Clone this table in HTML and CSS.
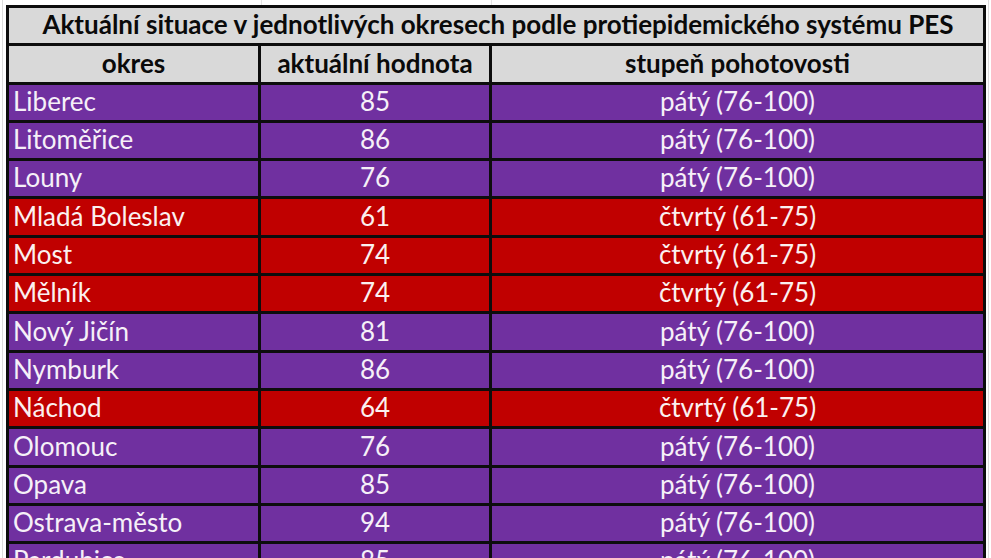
FILE: index.html
```html
<!DOCTYPE html>
<html lang="cs">
<head>
<meta charset="utf-8">
<title>PES okresy</title>
<link rel="stylesheet" href="styles.css">
</head>
<body>
<div class="sheet">
  <div class="grid">
    <div class="cell title">Aktuální situace v jednotlivých okresech podle protiepidemického systému PES</div>
    <div class="cell head">okres</div>
    <div class="cell head">aktuální hodnota</div>
    <div class="cell head">stupeň pohotovosti</div>

    <div class="cell name p5">Liberec</div><div class="cell num p5">85</div><div class="cell lvl p5">pátý (76-100)</div>
    <div class="cell name p5">Litoměřice</div><div class="cell num p5">86</div><div class="cell lvl p5">pátý (76-100)</div>
    <div class="cell name p5">Louny</div><div class="cell num p5">76</div><div class="cell lvl p5">pátý (76-100)</div>
    <div class="cell name p4">Mladá Boleslav</div><div class="cell num p4">61</div><div class="cell lvl p4">čtvrtý (61-75)</div>
    <div class="cell name p4">Most</div><div class="cell num p4">74</div><div class="cell lvl p4">čtvrtý (61-75)</div>
    <div class="cell name p4">Mělník</div><div class="cell num p4">74</div><div class="cell lvl p4">čtvrtý (61-75)</div>
    <div class="cell name p5">Nový Jičín</div><div class="cell num p5">81</div><div class="cell lvl p5">pátý (76-100)</div>
    <div class="cell name p5">Nymburk</div><div class="cell num p5">86</div><div class="cell lvl p5">pátý (76-100)</div>
    <div class="cell name p4">Náchod</div><div class="cell num p4">64</div><div class="cell lvl p4">čtvrtý (61-75)</div>
    <div class="cell name p5">Olomouc</div><div class="cell num p5">76</div><div class="cell lvl p5">pátý (76-100)</div>
    <div class="cell name p5">Opava</div><div class="cell num p5">85</div><div class="cell lvl p5">pátý (76-100)</div>
    <div class="cell name p5">Ostrava-město</div><div class="cell num p5">94</div><div class="cell lvl p5">pátý (76-100)</div>
    <div class="cell name p5">Pardubice</div><div class="cell num p5">85</div><div class="cell lvl p5">pátý (76-100)</div>
  </div>
</div>
</body>
</html>
```
FILE: styles.css
```css
html, body {
  margin: 0;
  padding: 0;
  background: #ffffff;
  overflow: hidden;
}

.sheet {
  width: 991px;
  height: 558px;
  padding: 5px 0 0 6px;
  box-sizing: border-box;
  background:
    linear-gradient(90deg, transparent 2px, #dcdcdc 2px, #dcdcdc 3px, transparent 3px),
    linear-gradient(90deg, transparent 988px, #dcdcdc 988px, #dcdcdc 989px, transparent 989px),
    linear-gradient(90deg, transparent 261px, #e4e4e4 261px, #e4e4e4 262px, transparent 262px, transparent 491px, #e4e4e4 491px, #e4e4e4 492px, transparent 492px) top / 100% 6px no-repeat,
    #ffffff;
  font-family: Lato, "Open Sans", "Liberation Sans", sans-serif;
}

.grid {
  display: grid;
  grid-template-columns: 252px 231px 494px;
  grid-auto-rows: 38.3px;
  width: 980px;
  border-left: 3px solid #0d0d0d;
  border-top: 3px solid #0d0d0d;
  box-sizing: border-box;
}

.cell {
  box-sizing: border-box;
  border-right: 3px solid #0d0d0d;
  border-bottom: 3px solid #0d0d0d;
  display: flex;
  align-items: flex-end;
  padding-bottom: 3px;
  font-size: 26px;
  line-height: 31px;
  white-space: nowrap;
  overflow: hidden;
}

.title {
  grid-column: 1 / 4;
  justify-content: center;
  background: #d9d9d9;
  color: #0a0a0a;
  font-weight: 700;
  height: 38px;
  padding-left: 4px;
}

.head {
  justify-content: center;
  background: #d9d9d9;
  color: #0a0a0a;
  font-weight: 700;
}

.name {
  padding-left: 4px;
}

.num, .lvl {
  justify-content: center;
}

.p5 {
  background: #7030a0;
  color: #f6f0f8;
}

.p4 {
  background: #c00000;
  color: #fbf0f0;
}
```
